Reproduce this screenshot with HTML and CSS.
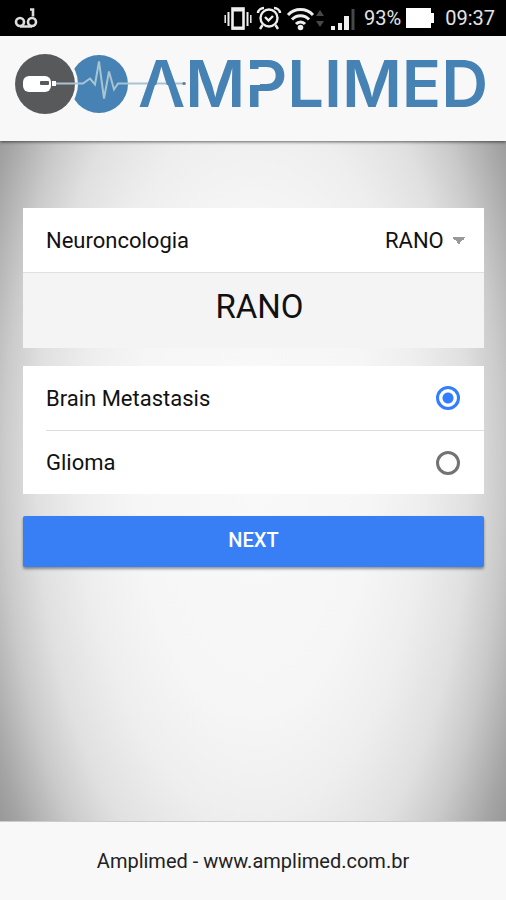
FILE: index.html
```html
<!DOCTYPE html>
<html lang="en">
<head>
<meta charset="utf-8">
<meta name="viewport" content="width=device-width, initial-scale=1">
<title>Amplimed</title>
<link rel="stylesheet" href="styles.css">
</head>
<body>
<div class="status">
  <svg class="voicemail" width="24" height="22" viewBox="0 0 24 22" fill="none" stroke="#ddd" stroke-width="2.600" aria-hidden="true">
    <circle cx="6" cy="15" r="4"/><circle cx="18" cy="15" r="4"/><path d="M6 19.500h12M16 2.500h3v7"/>
  </svg>
  <div class="indicators">
    <svg width="28" height="26" viewBox="0 0 28 26" fill="none" stroke="#eee" aria-hidden="true">
      <rect x="8.500" y="3.500" width="11" height="20" stroke-width="2.600"/><path d="M8 5h12M8 23h12" stroke-width="3"/>
      <path d="M4.500 7v14M23.500 7v14" stroke-width="2"/><path d="M1.200 10v8M26.800 10v8" stroke-width="1.500"/>
    </svg>
    <svg width="26" height="26" viewBox="0 0 26 26" fill="none" stroke="#eee" stroke-width="2.400" aria-hidden="true">
      <circle cx="13" cy="13" r="8.500"/><path d="M9 12l3.500 3.500L17 11M2 8c0-3 3-5 6-5M24 8c0-3-3-5-6-5M6.500 20L4 24M19.500 20l2.500 4"/>
    </svg>
    <svg class="wifi" width="40" height="26" viewBox="0 0 40 26" fill="none" stroke="#eee" stroke-width="3" aria-hidden="true">
      <path d="M2 10a17 17 0 0 1 25 0M6 14.500a11.500 11.500 0 0 1 17 0M10 19a6 6 0 0 1 9 0"/><circle cx="14.500" cy="22.500" r="2.800" fill="#eee" stroke="none"/>
      <path d="M30 11l4-6 4 6zM30 16l4 6 4-6z" fill="#484848" stroke="none"/>
    </svg>
    <svg class="signal" width="26" height="26" viewBox="0 0 26 26" fill="#eee" aria-hidden="true">
      <path d="M1 21h4v4H1zM8 18h4v7H8zM14 11h5v14h-5z"/><path d="M21.500 4h3v21h-3z" fill="#484848"/>
    </svg>
    <span class="battery-level">93%</span>
    <svg class="battery" width="29" height="20" viewBox="0 0 29 20" fill="#fff" aria-hidden="true"><path d="M0 0h25v5h3v10h-3v5H0z"/></svg>
    <span>09:37</span>
  </div>
</div>
<header class="header">
  <svg class="logo" viewBox="0 -10 480 80" role="img" aria-label="Amplimed">
    <circle cx="85" cy="30" r="29" fill="#4682b4"/>
    <circle cx="31" cy="30" r="33" fill="#f8f8f8"/>
    <circle cx="31" cy="30" r="30" fill="#58595b"/>
    <rect x="9" y="22" width="28" height="16" rx="6" fill="#fff"/>
    <rect x="26" y="27" width="9" height="4" rx="1" fill="#58595b"/>
    <rect x="38" y="27" width="4" height="5" fill="#fff"/>
    <path class="wave" d="M42 29.500H69l7-5 5 6 4-23 5 37 5-27 5 18 4-6h68"/>
    <text class="wordmark" x="124" y="53">AMPLIMED</text>
    <path class="cutout" d="M141 31h13l7 22h-27zM233 15h13v16h-13z"/>
    <circle cx="170" cy="29.500" r="1.600" fill="#607b90"/>
  </svg>
</header>
<main class="content">
  <section class="card">
    <div class="row">
      <label for="scale">Neuroncologia</label>
      <select id="scale" class="picker"><option>RANO</option></select>
    </div>
    <h1 class="title">RANO</h1>
  </section>
  <form class="form">
    <div class="card">
      <label class="row">Brain Metastasis<input class="radio" type="radio" name="type" checked></label>
      <label class="row row-divided">Glioma<input class="radio" type="radio" name="type"></label>
    </div>
    <button class="next" type="button">NEXT</button>
  </form>
</main>
<footer class="footer">Amplimed - www.amplimed.com.br</footer>
</body>
</html>
```
FILE: styles.css
```css
* { box-sizing: border-box; }
body {
  margin: 0;
  min-height: 100vh;
  display: flex;
  flex-direction: column;
  font-family: Roboto, sans-serif;
  font-size: 22px;
  color: #111;
  background: #f8f8f8;
}
.status {
  height: 36px;
  padding: 0 11px 0 14px;
  display: flex;
  align-items: center;
  justify-content: space-between;
  background: #000;
  color: #e4e4e4;
  font-size: 20px;
}
.indicators { display: flex; align-items: center; gap: 4px; }
.battery-level { margin: 0 1px 0 4px; }
.battery { margin: 0 6px 0 0; }
.header {
  position: relative;
  padding: 8px 12px 17px 14px;
  background: #f8f8f8;
  box-shadow: 0 1px 3px rgba(0, 0, 0, 0.6);
}
.logo { display: block; width: 100%; }
.wave { fill: none; stroke: #a9c4d1; stroke-width: 2; }
.wordmark { font-family: Inter, sans-serif; font-size: 65px; font-weight: 600; fill: #4682b4; }
.cutout { fill: #f8f8f8; }
.content {
  flex: 1;
  padding: 67px 22px 24px 23px;
  background: radial-gradient(ellipse 130% 200% at 50% 48%, #f9f9f9 0%, #f6f6f6 18%, #eee 26%, #e0e0e0 33%, #cacaca 38%, #a4a4a4 44%, #888 50%);
}
.card { background: #fff; }
.row {
  display: flex;
  align-items: center;
  justify-content: space-between;
  height: 64px;
  padding: 0 24px 0 23px;
}
.row-divided { margin-left: 23px; padding-left: 0; border-top: 1px solid #ddd; }
.picker {
  appearance: none;
  border: 0;
  margin-right: -6px;
  padding: 0 22px 0 0;
  font: inherit;
  color: inherit;
  background: linear-gradient(to bottom left, #999 50%, transparent 50%) right 7px top 50% / 7px 7px no-repeat,
    linear-gradient(to bottom right, #999 50%, transparent 50%) right 0 top 50% / 7px 7px no-repeat;
}
.title {
  margin: 0;
  height: 76px;
  padding: 14px 0 0 12px;
  border-top: 1px solid #e0e0e0;
  background: #f4f4f4;
  font-size: 33px;
  line-height: 40px;
  font-weight: 400;
  text-align: center;
}
.form { margin-top: 18px; }
.radio {
  appearance: none;
  width: 24px;
  height: 24px;
  margin: 0;
  border: 3px solid #737373;
  border-radius: 50%;
}
.radio:checked {
  border-color: #327eff;
  background: radial-gradient(circle, #327eff 5px, transparent 6px);
}
.next {
  display: block;
  width: 100%;
  height: 51px;
  margin-top: 22px;
  padding-bottom: 4px;
  border: 0;
  border-radius: 2px;
  background: #387ef5;
  color: #fff;
  font: 500 20px Roboto, sans-serif;
  box-shadow: 0 2px 3px rgba(0, 0, 0, 0.4);
}
.footer {
  height: 79px;
  display: flex;
  align-items: center;
  justify-content: center;
  border-top: 1px solid #ccc;
  background: #f8f8f8;
  font-size: 20px;
  color: #222;
}
```
